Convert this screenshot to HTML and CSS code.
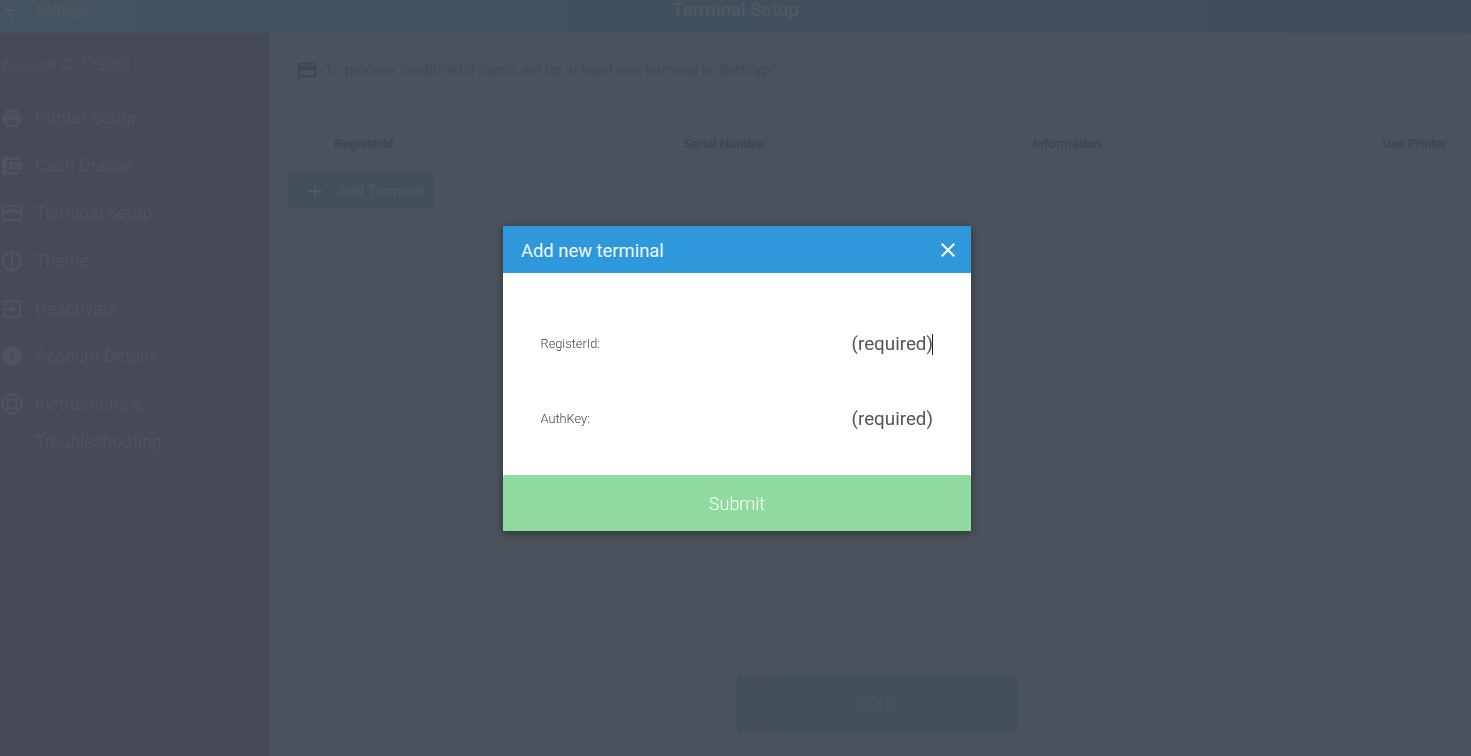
FILE: index.html
```html
<!DOCTYPE html>
<html>
  <head>
    <title>Terminal Setup</title>
    <link rel="stylesheet" href="styles.css">
  </head>
  <body>
    <div class="app">
      <header class="topbar">
        <div class="topbar-back">
          <svg class="back-icon" viewBox="0 0 24 24"><path d="M20 11H7.83l5.59-5.59L12 4l-8 8 8 8 1.41-1.41L7.83 13H20z"/></svg>
          <span>Settings</span>
        </div>
        <div class="topbar-title">Terminal Setup</div>
      </header>

      <div class="content">
        <aside class="sidebar">
          <div class="account-id">Account ID: 115369</div>
          <ul class="menu">
            <li class="menu-item">
              <svg class="menu-icon" viewBox="0 0 24 24"><path d="M19 8H5c-1.66 0-3 1.34-3 3v6h4v4h12v-4h4v-6c0-1.66-1.34-3-3-3zm-3 11H8v-5h8v5zm3-7c-.55 0-1-.45-1-1s.45-1 1-1 1 .45 1 1-.45 1-1 1zm-1-9H6v4h12V3z"/></svg>
              <span>Printer Setup</span>
            </li>
            <li class="menu-item">
              <svg class="menu-icon" viewBox="0 0 24 24"><path d="M2 3h15a2 2 0 0 1 2 2v1H9a2 2 0 0 0-2 2v8a2 2 0 0 0 2 2h10v1a2 2 0 0 1-2 2H2zm7 5h13v8H9zm5 2.2a1.8 1.8 0 1 0 0 3.6 1.8 1.8 0 0 0 0-3.6z" fill-rule="evenodd"/></svg>
              <span>Cash Drawer</span>
            </li>
            <li class="menu-item">
              <svg class="menu-icon" viewBox="0 0 24 24"><path d="M20 4H4c-1.11 0-1.99.89-1.99 2L2 18c0 1.11.89 2 2 2h16c1.11 0 2-.89 2-2V6c0-1.11-.89-2-2-2zm0 14H4v-6h16v6zm0-10H4V6h16v2z"/></svg>
              <span>Terminal Setup</span>
            </li>
            <li class="menu-item">
              <svg class="menu-icon" viewBox="0 0 24 24"><path d="M12 1.500a10.500 10.500 0 1 0 0 21 10.500 10.500 0 0 0 0-21zm-1 2.700v15.600A8 8 0 0 1 4 12a8 8 0 0 1 7-7.800zm2 0a8 8 0 0 1 0 15.600z" fill-rule="evenodd"/></svg>
              <span>Theme</span>
            </li>
            <li class="menu-item">
              <svg class="menu-icon" viewBox="0 0 24 24"><path d="M10.09 15.59L11.5 17l5-5-5-5-1.41 1.41L12.67 11H3v2h9.67l-2.58 2.59zM19 3H5c-1.11 0-2 .9-2 2v4h2V5h14v14H5v-4H3v4c0 1.1.89 2 2 2h14c1.1 0 2-.9 2-2V5c0-1.1-.9-2-2-2z"/></svg>
              <span>Deactivate</span>
            </li>
            <li class="menu-item">
              <svg class="menu-icon" viewBox="0 0 24 24"><path d="M12 2C6.48 2 2 6.48 2 12s4.48 10 10 10 10-4.48 10-10S17.52 2 12 2zm1 15h-2v-6h2v6zm0-8h-2V7h2v2z"/></svg>
              <span>Account Details</span>
            </li>
            <li class="menu-item">
              <svg class="menu-icon menu-icon-ring" viewBox="0 0 24 24">
                <circle cx="12" cy="12" r="9.500"/>
                <circle cx="12" cy="12" r="4.500"/>
                <path d="M5.300 5.300l3.500 3.500M18.700 5.300l-3.500 3.500M5.300 18.700l3.500-3.500M18.700 18.700l-3.500-3.500"/>
              </svg>
              <span>Instructions &amp; Troubleshooting</span>
            </li>
          </ul>
        </aside>

        <main class="main">
          <div class="notice">
            <svg class="notice-icon" viewBox="0 0 24 24"><path d="M20 4H4c-1.11 0-1.99.89-1.99 2L2 18c0 1.11.89 2 2 2h16c1.11 0 2-.89 2-2V6c0-1.11-.89-2-2-2zm0 14H4v-6h16v6zm0-10H4V6h16v2z"/></svg>
            <span>To process credit/debit cards, set up at least one terminal in 'Settings'.</span>
          </div>

          <div class="table-head">
            <div>RegisterId</div>
            <div>Serial Number</div>
            <div>Information</div>
            <div>Use Printer</div>
          </div>

          <button class="add-button">
            <svg class="add-icon" viewBox="0 0 24 24"><path d="M19 13h-6v6h-2v-6H5v-2h6V5h2v6h6v2z"/></svg>
            <span>Add Terminal</span>
          </button>

          <div class="done-row">
            <button class="done-button">DONE</button>
          </div>
        </main>
      </div>
    </div>

    <div class="overlay">
      <div class="dialog">
        <div class="dialog-header">
          <span>Add new terminal</span>
          <svg class="close-icon" viewBox="0 0 14 14"><path d="M14 1.410L12.590 0 7 5.590 1.410 0 0 1.410 5.590 7 0 12.590 1.410 14 7 8.410 12.590 14 14 12.590 8.410 7z"/></svg>
        </div>
        <div class="dialog-body">
          <div class="field">
            <span class="field-label">RegisterId:</span>
            <span class="field-value field-active">(required)</span>
          </div>
          <div class="field">
            <span class="field-label">AuthKey:</span>
            <span class="field-value">(required)</span>
          </div>
        </div>
        <button class="submit-button">Submit</button>
      </div>
    </div>
  </body>
</html>
```

FILE: styles.css
```css
* {
  box-sizing: border-box;
}

html,
body {
  height: 100%;
}

body {
  margin: 0;
  overflow: hidden;
  font-family: Roboto, Arial, sans-serif;
  background-color: #4b525c;
}

.app {
  display: flex;
  flex-direction: column;
  height: 756px;
}

/* barra superior */
.topbar {
  position: relative;
  display: flex;
  align-items: center;
  justify-content: center;
  flex: 0 0 33px;
  background: linear-gradient(90deg, #445360, #3f4d5a);
  color: #4e5963;
}

.topbar-back {
  position: absolute;
  left: 0;
  top: -2px;
  display: flex;
  align-items: center;
  gap: 11px;
  height: 24px;
  font-size: 14.800px;
  font-weight: 500;
}

.back-icon {
  width: 24px;
  height: 24px;
  fill: #4e5963;
}

.topbar-title {
  margin-top: -14px;
  font-size: 18.700px;
  font-weight: 500;
}

.content {
  display: flex;
  flex: 1;
  min-height: 0;
}

/* menu lateral */
.sidebar {
  flex: 0 0 269px;
  padding: 22px 0 0;
  background-color: #454a55;
  color: #4e535d;
}

.account-id {
  height: 20px;
  padding-left: 2px;
  font-size: 14.700px;
  line-height: 20px;
}

.menu {
  list-style: none;
  margin: 19px 0 0;
  padding: 0;
}

.menu-item {
  display: flex;
  align-items: flex-start;
  gap: 11px;
  padding: 5px 0 4.670px;
  font-size: 17.500px;
  line-height: 38px;
}

.menu-item span {
  width: 150px;
}

.menu-icon {
  flex: 0 0 24px;
  width: 24px;
  height: 24px;
  margin-top: 7px;
  fill: #4e535d;
}

.menu-icon-ring {
  fill: none;
  stroke: #4e535d;
  stroke-width: 2.500;
}

/* area principal */
.main {
  flex: 1;
  min-width: 0;
  display: flex;
  flex-direction: column;
  padding: 0 0 24px 19px;
  color: #444953;
}

.notice {
  display: flex;
  align-items: center;
  gap: 7px;
  margin: 26px 0 0 8px;
  height: 22px;
  font-size: 14.600px;
}

.notice-icon {
  width: 22px;
  height: 22px;
  fill: #3f444e;
}

.table-head {
  display: grid;
  grid-template-columns: 349.500px 349.500px 349.500px auto;
  align-items: center;
  height: 36px;
  margin: 45px 0 0 -19px;
  padding-left: 65px;
  border-bottom: 1px solid #484f59;
  color: #3f444e;
  font-size: 13px;
  font-weight: 500;
}

.add-button {
  display: flex;
  align-items: center;
  gap: 12px;
  width: 146px;
  height: 37px;
  margin-top: 10px;
  padding: 0 0 0 16px;
  border: none;
  border-radius: 2px;
  background-color: #425058;
  color: #4d5a62;
  font-family: inherit;
  font-size: 14.700px;
}

.add-icon {
  width: 22px;
  height: 22px;
  fill: #4f5c64;
}

.done-row {
  margin-top: auto;
  padding-left: 449px;
}

.done-button {
  display: block;
  width: 281px;
  height: 56px;
  border: none;
  border-radius: 2px;
  background-color: #434f5b;
  color: #4b5560;
  font-family: inherit;
  font-size: 17px;
}

/* dialogo */
.overlay {
  position: fixed;
  top: 0;
  left: 0;
  width: 1471px;
  height: 756px;
}

.dialog {
  position: absolute;
  left: 503px;
  top: 226px;
  display: flex;
  flex-direction: column;
  width: 468px;
  height: 305px;
  background-color: #fff;
  box-shadow: 0 2px 8px rgba(0, 0, 0, 0.4);
}

.dialog-header {
  display: flex;
  align-items: center;
  justify-content: space-between;
  flex: 0 0 47px;
  padding: 1px 16px 0 18px;
  background-color: #2f98db;
  color: #f0f8fd;
  font-size: 18.400px;
  font-weight: 400;
}

.close-icon {
  width: 14px;
  height: 14px;
  fill: #fff;
}

.dialog-body {
  flex: 1;
  padding: 33px 38px 0 37.500px;
}

.field {
  display: flex;
  align-items: center;
  justify-content: space-between;
  height: 75px;
}

.field-label {
  font-size: 12.800px;
  font-weight: 300;
  color: #444;
}

.field-value {
  font-size: 18.800px;
  font-weight: 400;
  color: #555;
}

.field-active::after {
  content: "";
  display: inline-block;
  width: 1px;
  height: 21px;
  margin-left: -1px;
  vertical-align: -5px;
  background-color: #222;
}

.submit-button {
  flex: 0 0 56px;
  border: none;
  border-radius: 2px 2px 0 0;
  background-color: #90da9f;
  color: #fff;
  font-family: inherit;
  font-size: 18px;
  font-weight: 300;
}
```
